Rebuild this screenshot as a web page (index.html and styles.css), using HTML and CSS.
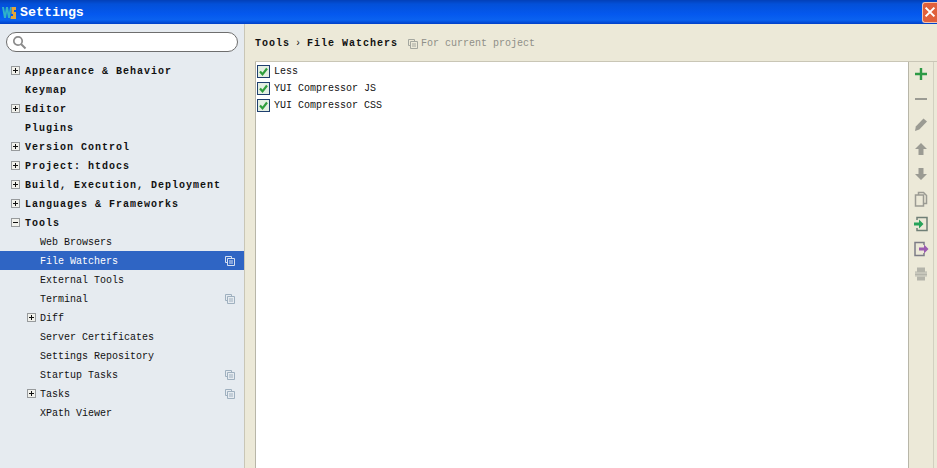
FILE: index.html
```html
<!DOCTYPE html>
<html lang="en">
<head>
<meta charset="utf-8">
<title>Settings</title>
<link rel="stylesheet" href="styles.css">
</head>
<body>
<svg class="defs" width="0" height="0" aria-hidden="true">
  <symbol id="plus" viewBox="0 0 9 9"><rect x=".5" y=".5" width="8" height="8" fill="#f1f1ec" stroke="#979a9c"/><path d="M2 4.500h5M4.500 2v5" stroke="#111"/></symbol>
  <symbol id="minus" viewBox="0 0 9 9"><rect x=".5" y=".5" width="8" height="8" fill="#f1f1ec" stroke="#979a9c"/><path d="M2 4.500h5" stroke="#111"/></symbol>
  <symbol id="copy" viewBox="0 0 10 10"><path d="M.5.500h6v2M.5.500v6h2" fill="none" stroke="currentColor"/><path d="M2.500 2.500h7v7h-7zM4 5h4M4 7h4" fill="none" stroke="currentColor"/></symbol>
  <symbol id="check" viewBox="0 0 13 13"><rect x=".5" y=".5" width="12" height="12" fill="#e4efe2" stroke="#1f3f6e"/><path d="M3 6.500l2.500 2.800 4.500-5.800" fill="none" stroke="#2f9e3c" stroke-width="2.200"/></symbol>
</svg>
<header class="titlebar">
  <svg class="logo" width="14" height="15" viewBox="0 0 14 15"><path d="M0 2h2l1 6 1-6h2l1 6 1-6h1.500L8 13H6L5 7l-1 6H2z" fill="#2fb3c8"/><path d="M9.500 2H14v3h-2v2h2v7H8.500l.5-3h2V9H9.500z" fill="#e0a53c"/></svg>
  <span class="title">Settings</span>
  <span class="close"><svg width="16" height="16" viewBox="0 0 16 16"><path d="M3 3l10 10M13 3L3 13" stroke="#fff" stroke-width="2.400"/></svg></span>
</header>
<div class="body">
  <aside class="sidebar">
    <div class="search">
      <svg width="15" height="15" viewBox="0 0 15 15"><circle cx="6" cy="6" r="4.200" fill="none" stroke="#8b8b8b" stroke-width="1.700"/><path d="M9 9l4.500 4.500" stroke="#8b8b8b" stroke-width="2"/></svg>
    </div>
    <ul class="tree">
      <li class="row top"><svg class="tog"><use href="#plus"/></svg><span>Appearance &amp; Behavior</span></li>
      <li class="row top"><i class="tog"></i><span>Keymap</span></li>
      <li class="row top"><svg class="tog"><use href="#plus"/></svg><span>Editor</span></li>
      <li class="row top"><i class="tog"></i><span>Plugins</span></li>
      <li class="row top"><svg class="tog"><use href="#plus"/></svg><span>Version Control</span></li>
      <li class="row top"><svg class="tog"><use href="#plus"/></svg><span>Project: htdocs</span></li>
      <li class="row top"><svg class="tog"><use href="#plus"/></svg><span>Build, Execution, Deployment</span></li>
      <li class="row top"><svg class="tog"><use href="#plus"/></svg><span>Languages &amp; Frameworks</span></li>
      <li class="row top"><svg class="tog"><use href="#minus"/></svg><span>Tools</span></li>
      <li class="row sub"><i class="tog"></i><span>Web Browsers</span></li>
      <li class="row sub selected"><i class="tog"></i><span>File Watchers</span><svg class="scope"><use href="#copy"/></svg></li>
      <li class="row sub"><i class="tog"></i><span>External Tools</span></li>
      <li class="row sub"><i class="tog"></i><span>Terminal</span><svg class="scope"><use href="#copy"/></svg></li>
      <li class="row sub"><svg class="tog"><use href="#plus"/></svg><span>Diff</span></li>
      <li class="row sub"><i class="tog"></i><span>Server Certificates</span></li>
      <li class="row sub"><i class="tog"></i><span>Settings Repository</span></li>
      <li class="row sub"><i class="tog"></i><span>Startup Tasks</span><svg class="scope"><use href="#copy"/></svg></li>
      <li class="row sub"><svg class="tog"><use href="#plus"/></svg><span>Tasks</span><svg class="scope"><use href="#copy"/></svg></li>
      <li class="row sub"><i class="tog"></i><span>XPath Viewer</span></li>
    </ul>
  </aside>
  <main class="content">
    <div class="crumbs">
      <b>Tools</b><span class="sep">›</span><b>File Watchers</b>
      <svg class="scope hint-icon"><use href="#copy"/></svg>
      <span class="hint">For current project</span>
    </div>
    <div class="panel">
      <ul class="list">
        <li><svg class="cb"><use href="#check"/></svg>Less</li>
        <li><svg class="cb"><use href="#check"/></svg>YUI Compressor JS</li>
        <li><svg class="cb"><use href="#check"/></svg>YUI Compressor CSS</li>
      </ul>
      <div class="tools">
        <svg width="16" height="16" viewBox="0 0 16 16"><path d="M8 2v12M2 8h12" stroke="#2d9a45" stroke-width="2.400"/></svg>
        <svg width="16" height="16" viewBox="0 0 16 16"><path d="M2 8h12" stroke="#9b9b93" stroke-width="2"/></svg>
        <svg width="16" height="16" viewBox="0 0 16 16"><path d="M2 15l.8-4.500L10.500 2.500l3.500 3-7.700 8z" fill="#9b9b93"/></svg>
        <svg width="16" height="16" viewBox="0 0 16 16"><path d="M8 2l6 6h-3.500v6h-5V8H2z" fill="#9b9b93"/></svg>
        <svg width="16" height="16" viewBox="0 0 16 16"><path d="M8 14l6-6h-3.500V2h-5v6H2z" fill="#9b9b93"/></svg>
        <svg width="16" height="16" viewBox="0 0 16 16"><path d="M5.500 3.500V1.500h5l3 3v8h-2.500M2.500 4h8v11h-8z" fill="none" stroke="#9b9b93" stroke-width="1.500"/></svg>
        <svg width="16" height="16" viewBox="0 0 16 16"><path d="M4 4V1.500h10v13H4V12" fill="none" stroke="#6f7f76" stroke-width="1.500"/><path d="M1 6.500h5V3.500l4.500 4.500L6 12.500V9.500H1z" fill="#27a35a"/></svg>
        <svg width="16" height="16" viewBox="0 0 16 16"><path d="M11 4V1.500H2v13h9V12" fill="none" stroke="#7c7c86" stroke-width="1.500"/><path d="M6 6.500h5V3.500l4.500 4.500L11 12.500V9.500H6z" fill="#9a5bb0"/></svg>
        <svg width="16" height="16" viewBox="0 0 16 16"><path d="M4 1.500h8v4h2v5h-2v4H4v-4H2v-5h2z" fill="#b4b4aa"/><path d="M2 7h12M2 10h12" stroke="#d9d8cb"/></svg>
      </div>
    </div>
  </main>
</div>
</body>
</html>
```
FILE: styles.css
```css
* { box-sizing: border-box; }
html, body { margin: 0; height: 100%; }
body {
  width: 937px;
  height: 468px;
  overflow: hidden;
  display: flex;
  flex-direction: column;
  font-family: "Liberation Mono", "Noto Sans CJK SC", monospace;
  font-size: 10px;
  color: #111;
  background: #ece9d8;
}
.defs { position: absolute; }
ul { list-style: none; margin: 0; padding: 0; }

.titlebar {
  height: 24px;
  flex: none;
  display: flex;
  align-items: center;
  padding-left: 2px;
  background: linear-gradient(#0340b8 0, #0350d8 4px, #0458ee 14px, #0a62f0 20px, #0040c8 24px);
  color: #fff;
}
.logo { margin-right: 4px; }
.title { font-size: 13.3px; font-weight: bold; }
.close {
  margin-left: auto;
  width: 15px;
  height: 21px;
  overflow: hidden;
  background: #e0603c;
  border: 1px solid #f2c2ae;
  border-right: 0;
  border-radius: 3px 0 0 3px;
  display: flex;
  align-items: center;
}

.body { flex: 1; display: flex; min-height: 0; }

.sidebar {
  width: 245px;
  flex: none;
  padding-top: 8px;
  background: #e6ebf0;
  border-right: 1px solid #c9c6b6;
}
.search {
  width: 232px;
  height: 20px;
  margin-left: 6px;
  padding-left: 5px;
  display: flex;
  align-items: center;
  background: #fff;
  border: 1px solid #6e6e6e;
  border-radius: 10px;
}
.tree { margin-top: 9px; }
.row {
  height: 19px;
  display: flex;
  align-items: center;
  white-space: nowrap;
}
.row span { padding-top: 1px; }
.tog { width: 9px; height: 9px; flex: none; margin-right: 5px; display: block; }
.top { padding-left: 11px; font-weight: bold; letter-spacing: 1px; }
.sub { padding-left: 26px; }
.sub svg.tog { margin: 0 4px 0 1px; }
.selected { background: #2f65c4; color: #fff; }
.scope { width: 10px; height: 10px; margin-left: auto; margin-right: 9px; color: #9fb0bf; flex: none; }
.selected .scope { color: #d5e0f2; }

.content { flex: 1; min-width: 0; display: flex; flex-direction: column; padding-left: 10px; }
.crumbs {
  height: 37px;
  flex: none;
  display: flex;
  align-items: center;
  padding-top: 2px;
  white-space: nowrap;
}
.crumbs b { letter-spacing: 1px; }
.sep { margin: 0 6px 0 5px; }
.hint-icon { margin: 0 3px 0 10px; color: #a4a79f; }
.hint { color: #8f8f88; }

.panel { flex: 1; display: flex; min-height: 0; border-top: 1px solid #c9c6b6; }
.list {
  flex: 1;
  padding-top: 1px;
  background: #fff;
  border-left: 1px solid #b8b6a8;
}
.list li { height: 17px; display: flex; align-items: center; white-space: nowrap; }
.cb { width: 13px; height: 13px; margin: 0 4px 0 1px; flex: none; }
.tools {
  width: 26px;
  margin-right: 3px;
  flex: none;
  display: flex;
  flex-direction: column;
  align-items: center;
  gap: 9px;
  padding-top: 4px;
  border-left: 1px solid #b8b6a8;
  border-right: 1px solid #d2d0c0;
}
```
